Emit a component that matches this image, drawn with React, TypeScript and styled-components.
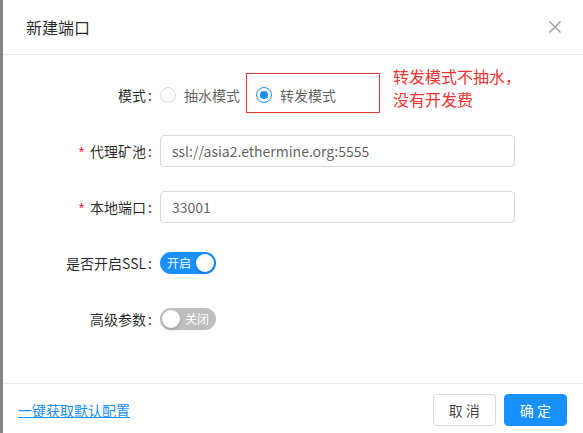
import React, { useState } from "react";
import styled, { createGlobalStyle } from "styled-components";

const GlobalStyle = createGlobalStyle`
  html, body {
    margin: 0;
    padding: 0;
    background: #858585;
    font-family: "Noto Sans CJK SC", "Noto Sans", sans-serif;
    overflow: hidden;
  }
  * { box-sizing: border-box; }
`;

const Page = styled.div`
  display: flex;
  padding-left: 3px;
  height: 433px;
  overflow: hidden;
`;

const Modal = styled.div`
  flex: 1;
  background: #fff;
  display: flex;
  flex-direction: column;
`;

const Header = styled.div`
  display: flex;
  align-items: center;
  justify-content: space-between;
  padding: 16px 22px 16px 23px;
  border-bottom: 1px solid #e8e8e8;
`;

const Title = styled.div`
  font-size: 16px;
  line-height: 22px;
  color: rgba(0, 0, 0, 0.85);
`;

const CloseButton = styled.button`
  border: 0;
  background: transparent;
  padding: 0;
  width: 12px;
  height: 12px;
  display: flex;
  cursor: pointer;
`;

const Body = styled.div`
  padding: 24px 24px 48px;
  display: flex;
  flex-direction: column;
  gap: 24px;
`;

const Row = styled.div`
  display: grid;
  grid-template-columns: 133px 355px;
  align-items: center;
  height: 32px;
`;

const Label = styled.label`
  display: flex;
  align-items: center;
  justify-content: flex-end;
  height: 32px;
  font-size: 14px;
  color: rgba(0, 0, 0, 0.85);
  white-space: nowrap;
`;

const Required = styled.span`
  position: relative;
  top: 3px;
  color: #f5222d;
  margin-right: 4px;
  font-family: "Liberation Mono", monospace;
  font-size: 15px;
  line-height: 1;
`;

const Colon = styled.span`
  margin: 0 8px 0 2px;
`;

const Control = styled.div`
  position: relative;
  display: flex;
  align-items: center;
  height: 32px;
`;

const RadioItem = styled.label`
  display: inline-flex;
  align-items: center;
  margin-right: 8px;
  font-size: 14px;
  color: rgba(0, 0, 0, 0.65);
  cursor: pointer;
`;

const RadioCircle = styled.span<{ $checked: boolean }>`
  width: 16px;
  height: 16px;
  border-radius: 50%;
  border: 1px solid ${(p) => (p.$checked ? "#1890ff" : "#d9d9d9")};
  display: flex;
  align-items: center;
  justify-content: center;
  &::after {
    content: "";
    width: 8px;
    height: 8px;
    border-radius: 50%;
    background: #1890ff;
    display: ${(p) => (p.$checked ? "block" : "none")};
  }
`;

const RadioText = styled.span`
  padding: 0 8px;
`;

const AnnotationBox = styled.div`
  position: absolute;
  left: 86px;
  top: -6px;
  width: 134px;
  height: 40px;
  border: 1px solid #e53935;
  pointer-events: none;
`;

const AnnotationNote = styled.div`
  position: absolute;
  left: 233px;
  top: -14px;
  font-size: 16px;
  line-height: 23px;
  color: #f5312f;
  white-space: nowrap;
`;

const Input = styled.input`
  width: 100%;
  height: 32px;
  border: 1px solid #d9d9d9;
  border-radius: 4px;
  padding: 4px 11px;
  font-size: 14px;
  font-family: inherit;
  color: rgba(0, 0, 0, 0.65);
  outline: none;
`;

const SwitchTrack = styled.button<{ $on: boolean }>`
  position: relative;
  width: 56px;
  height: 22px;
  border: 0;
  border-radius: 11px;
  background: ${(p) => (p.$on ? "#1890ff" : "#bfbfbf")};
  padding: 0;
  cursor: pointer;
  font-family: inherit;
`;

const SwitchKnob = styled.span<{ $on: boolean }>`
  position: absolute;
  top: 2px;
  left: ${(p) => (p.$on ? "36px" : "2px")};
  width: 18px;
  height: 18px;
  border-radius: 50%;
  background: #fff;
  box-shadow: 0 2px 4px rgba(0, 35, 11, 0.2);
`;

const SwitchText = styled.span<{ $on: boolean }>`
  display: block;
  font-size: 12px;
  line-height: 22px;
  color: #fff;
  text-align: left;
  margin: ${(p) => (p.$on ? "0 25px 0 7px" : "0 7px 0 25px")};
`;

const Footer = styled.div`
  display: flex;
  align-items: center;
  justify-content: space-between;
  padding: 10px 16px;
  border-top: 1px solid #e8e8e8;
`;

const Link = styled.a`
  font-size: 14px;
  color: #1890ff;
  text-decoration: underline;
  cursor: pointer;
  margin-left: -1px;
`;

const Buttons = styled.div`
  display: flex;
  gap: 8px;
`;

const Button = styled.button<{ $primary?: boolean }>`
  height: 32px;
  padding: 0 15px;
  font-size: 14px;
  font-family: inherit;
  border-radius: 4px;
  border: 1px solid ${(p) => (p.$primary ? "#1890ff" : "#d9d9d9")};
  background: ${(p) => (p.$primary ? "#1890ff" : "#fff")};
  color: ${(p) => (p.$primary ? "#fff" : "rgba(0,0,0,0.75)")};
  white-space: pre;
  cursor: pointer;
`;

const CloseIcon = () => (
  <svg width="12" height="12" viewBox="0 0 12 12">
    <path d="M0.5 0.5 L11.5 11.5 M11.5 0.5 L0.5 11.5" stroke="#999" strokeWidth="1.3" fill="none" />
  </svg>
);

function Switch({ on, onText, offText }: { on: boolean; onText: string; offText: string }) {
  const [v, setV] = useState(on);
  return (
    <SwitchTrack $on={v} onClick={() => setV(!v)}>
      <SwitchText $on={v}>{v ? onText : offText}</SwitchText>
      <SwitchKnob $on={v} />
    </SwitchTrack>
  );
}

export default function App() {
  const [mode, setMode] = useState("forward");
  return (
    <>
      <GlobalStyle />
      <Page>
        <Modal>
          <Header>
            <Title>新建端口</Title>
            <CloseButton aria-label="close">
              <CloseIcon />
            </CloseButton>
          </Header>
          <Body>
            <Row>
              <Label>
                模式<Colon>:</Colon>
              </Label>
              <Control>
                <RadioItem onClick={() => setMode("pump")}>
                  <RadioCircle $checked={mode === "pump"} />
                  <RadioText>抽水模式</RadioText>
                </RadioItem>
                <RadioItem onClick={() => setMode("forward")}>
                  <RadioCircle $checked={mode === "forward"} />
                  <RadioText>转发模式</RadioText>
                </RadioItem>
                <AnnotationBox />
                <AnnotationNote>
                  转发模式不抽水，
                  <br />
                  没有开发费
                </AnnotationNote>
              </Control>
            </Row>
            <Row>
              <Label>
                <Required>*</Required>代理矿池<Colon>:</Colon>
              </Label>
              <Control>
                <Input defaultValue="ssl://asia2.ethermine.org:5555" />
              </Control>
            </Row>
            <Row>
              <Label>
                <Required>*</Required>本地端口<Colon>:</Colon>
              </Label>
              <Control>
                <Input defaultValue="33001" />
              </Control>
            </Row>
            <Row>
              <Label>
                是否开启SSL<Colon>:</Colon>
              </Label>
              <Control>
                <Switch on={true} onText="开启" offText="关闭" />
              </Control>
            </Row>
            <Row>
              <Label>
                高级参数<Colon>:</Colon>
              </Label>
              <Control>
                <Switch on={false} onText="开启" offText="关闭" />
              </Control>
            </Row>
          </Body>
          <Footer>
            <Link>一键获取默认配置</Link>
            <Buttons>
              <Button>取 消</Button>
              <Button $primary>确 定</Button>
            </Buttons>
          </Footer>
        </Modal>
      </Page>
    </>
  );
}
